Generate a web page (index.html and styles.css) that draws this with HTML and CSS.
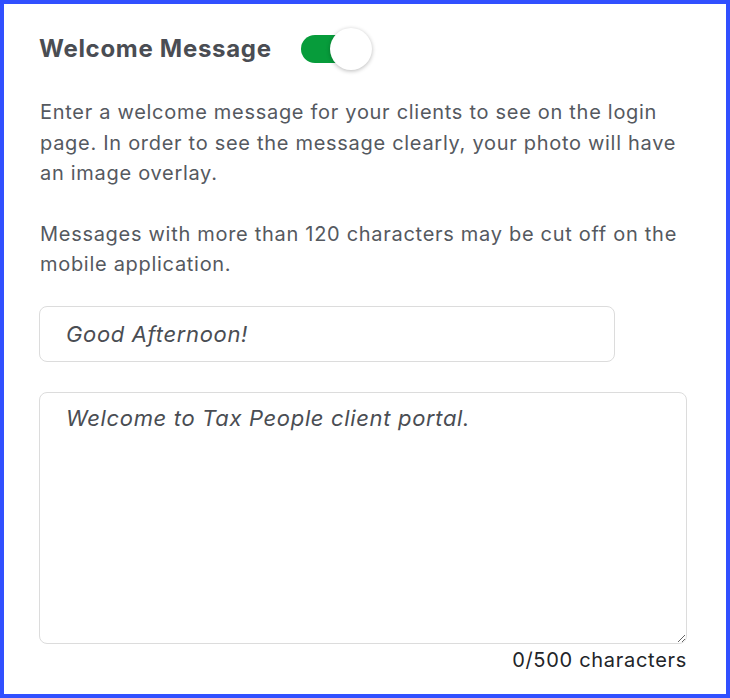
FILE: index.html
```html
<!DOCTYPE html>
<html lang="en">
<head>
  <meta charset="UTF-8" />
  <meta name="viewport" content="width=device-width, initial-scale=1.0" />
  <title>Welcome Message</title>
  <link rel="stylesheet" href="styles.css">
</head>
<body>
  <div class="panel">
    <div class="header">
      <h2>Welcome Message</h2>
      <label class="toggle">
        <input type="checkbox" checked />
        <span class="track"></span>
        <span class="knob"></span>
      </label>
    </div>
    <p>Enter a welcome message for your clients to see on the login page. In order to see the message clearly, your photo will have an image overlay.</p>
    <p>Messages with more than 120 characters may be cut off on the mobile application.</p>
    <input type="text" class="title-input" placeholder="Good Afternoon!" />
    <textarea class="message" placeholder="Welcome to Tax People client portal."></textarea>
    <div class="counter">0/500 characters</div>
  </div>
</body>
</html>
```

FILE: styles.css
```css
* {
  box-sizing: border-box;
}
html, body {
  margin: 0;
  height: 100%;
}
body {
  font-family: Inter, "Noto Sans", sans-serif;
  letter-spacing: 0.044em;
  background: white;
}
.panel {
  height: 698px;
  border: 4px solid #3150ff;
  padding: 27px 39px 0 35px;
}
.header {
  display: flex;
  align-items: center;
  gap: 29px;
  height: 35px;
}
h2 {
  margin: 0;
  font-size: 24px;
  font-weight: 700;
  color: #4a4d53;
}
.toggle {
  position: relative;
  width: 72px;
  height: 42px;
  display: flex;
  align-items: center;
  cursor: pointer;
}
.toggle input {
  display: none;
}
.track {
  width: 52px;
  height: 28px;
  border-radius: 14px;
  background: #079c3b;
}
.knob {
  position: absolute;
  left: 29px;
  top: 0;
  width: 42px;
  height: 42px;
  border-radius: 50%;
  background: white;
  box-shadow: 0 1px 4px rgba(0, 0, 0, 0.28);
}
p {
  margin: 31px 0 0 1px;
  font-size: 20px;
  line-height: 30.5px;
  color: #55595f;
}
p + p {
  margin-top: 30px;
}
.title-input, .message {
  display: block;
  font-family: Inter, "Noto Sans", sans-serif;
  font-style: italic;
  font-size: 22px;
  letter-spacing: 0.03em;
  color: #4a4d53;
  border: 1px solid #dcdcdc;
  border-radius: 8px;
  outline: none;
}
.title-input::placeholder, .message::placeholder {
  color: #4a4d53;
}
.title-input {
  margin-top: 26px;
  width: 576px;
  height: 56px;
  padding: 0 26px;
}
.message {
  margin-top: 30px;
  width: 648px;
  height: 252px;
  padding: 12px 26px;
  resize: vertical;
}
.counter {
  width: 648px;
  text-align: right;
  font-size: 20px;
  color: #222428;
  margin-top: 4px;
}
```
